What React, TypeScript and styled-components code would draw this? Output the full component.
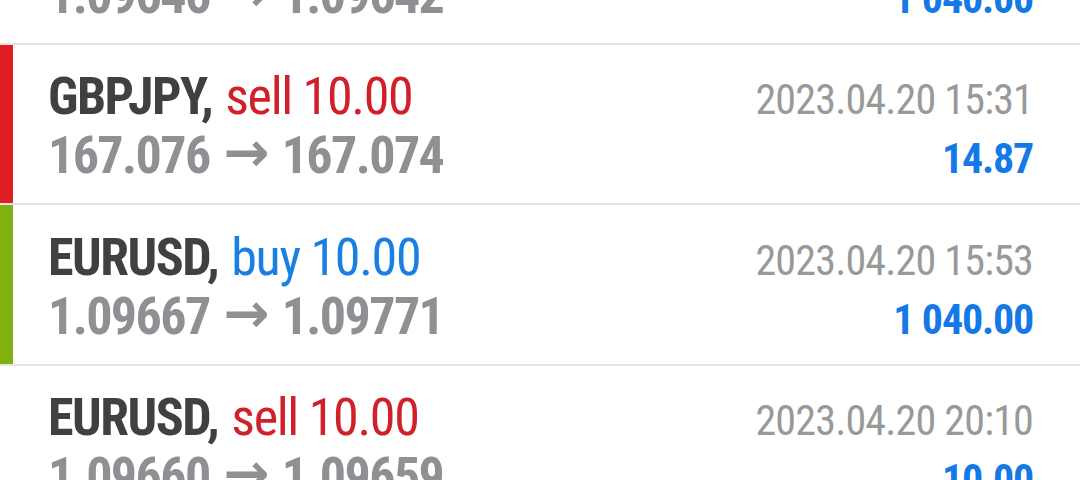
import React from 'react';
import styled, { createGlobalStyle } from 'styled-components';

const GlobalStyle = createGlobalStyle`
    html, body {
        margin: 0;
        padding: 0;
        background: #ffffff;
        overflow: hidden;
    }
    body {
        font-family: Roboto, "Liberation Sans", sans-serif;
        font-stretch: 75%;
    }
`;

const SList = styled.div`
    width: 1080px;
    margin-top: -116px;
    display: flex;
    flex-direction: column;
`;

const SRow = styled.div`
    display: flex;
    border-bottom: 2px solid #e4e4e4;
`;

const SMarker = styled.div<{ $color?: string }>`
    width: 13px;
    flex-shrink: 0;
    background: ${({ $color }) => $color ?? 'transparent'};
`;

const SContent = styled.div`
    flex: 1;
    padding: 23.5px 47px 21px 35px;
    display: flex;
    flex-direction: column;
`;

const SLine = styled.div`
    display: flex;
    justify-content: space-between;
    align-items: baseline;
    height: 57px;
    line-height: 57px;
    white-space: nowrap;
`;

const SSymbol = styled.span`
    font-size: 52px;
    font-weight: 700;
    letter-spacing: -1.5px;
    color: #404040;
`;

const SSide = styled.span<{ $sell: boolean }>`
    margin-left: 13px;
    font-size: 52px;
    font-weight: 400;
    letter-spacing: -1.3px;
    color: ${({ $sell }) => ($sell ? '#d0202a' : '#1a7fe3')};
`;

const SPrices = styled.span`
    font-size: 52px;
    font-weight: 700;
    letter-spacing: -1.6px;
    color: #8f8f94;
`;

const SArrow = styled.span`
    display: inline-block;
    margin: 0 12px 0 14px;
    font-family: "DejaVu Sans", sans-serif;
    font-stretch: normal;
    font-size: 55px;
    font-weight: 700;
    letter-spacing: 0;
    line-height: 1;
    vertical-align: 2px;
`;

const SDate = styled.span`
    font-size: 42px;
    font-weight: 400;
    letter-spacing: -0.8px;
    color: #999999;
`;

const SProfit = styled.span`
    font-size: 42px;
    font-weight: 700;
    letter-spacing: -1.2px;
    color: #1478e6;
`;

type Deal = {
    symbol: string;
    side: 'buy' | 'sell';
    volume: string;
    open: string;
    close: string;
    time: string;
    profit: string;
    marker?: string;
};

const deals: Deal[] = [
    { symbol: 'EURUSD', side: 'buy', volume: '10.00', open: '1.09646', close: '1.09642', time: '2023.04.20 15:10', profit: '1 040.00' },
    { symbol: 'GBPJPY', side: 'sell', volume: '10.00', open: '167.076', close: '167.074', time: '2023.04.20 15:31', profit: '14.87', marker: '#e11d24' },
    { symbol: 'EURUSD', side: 'buy', volume: '10.00', open: '1.09667', close: '1.09771', time: '2023.04.20 15:53', profit: '1 040.00', marker: '#7fb10f' },
    { symbol: 'EURUSD', side: 'sell', volume: '10.00', open: '1.09660', close: '1.09659', time: '2023.04.20 20:10', profit: '10.00' },
];

const DealRow = ({ deal }: { deal: Deal }) => (
    <SRow>
        <SMarker $color={deal.marker} />
        <SContent>
            <SLine>
                <span>
                    <SSymbol>{deal.symbol},</SSymbol>
                    <SSide $sell={deal.side === 'sell'}>
                        {deal.side} {deal.volume}
                    </SSide>
                </span>
                <SDate>{deal.time}</SDate>
            </SLine>
            <SLine>
                <SPrices>
                    {deal.open}
                    <SArrow>→</SArrow>
                    {deal.close}
                </SPrices>
                <SProfit>{deal.profit}</SProfit>
            </SLine>
        </SContent>
    </SRow>
);

export default function App() {
    return (
        <>
            <GlobalStyle />
            <SList>
                {deals.map((deal, i) => (
                    <DealRow key={i} deal={deal} />
                ))}
            </SList>
        </>
    );
}
